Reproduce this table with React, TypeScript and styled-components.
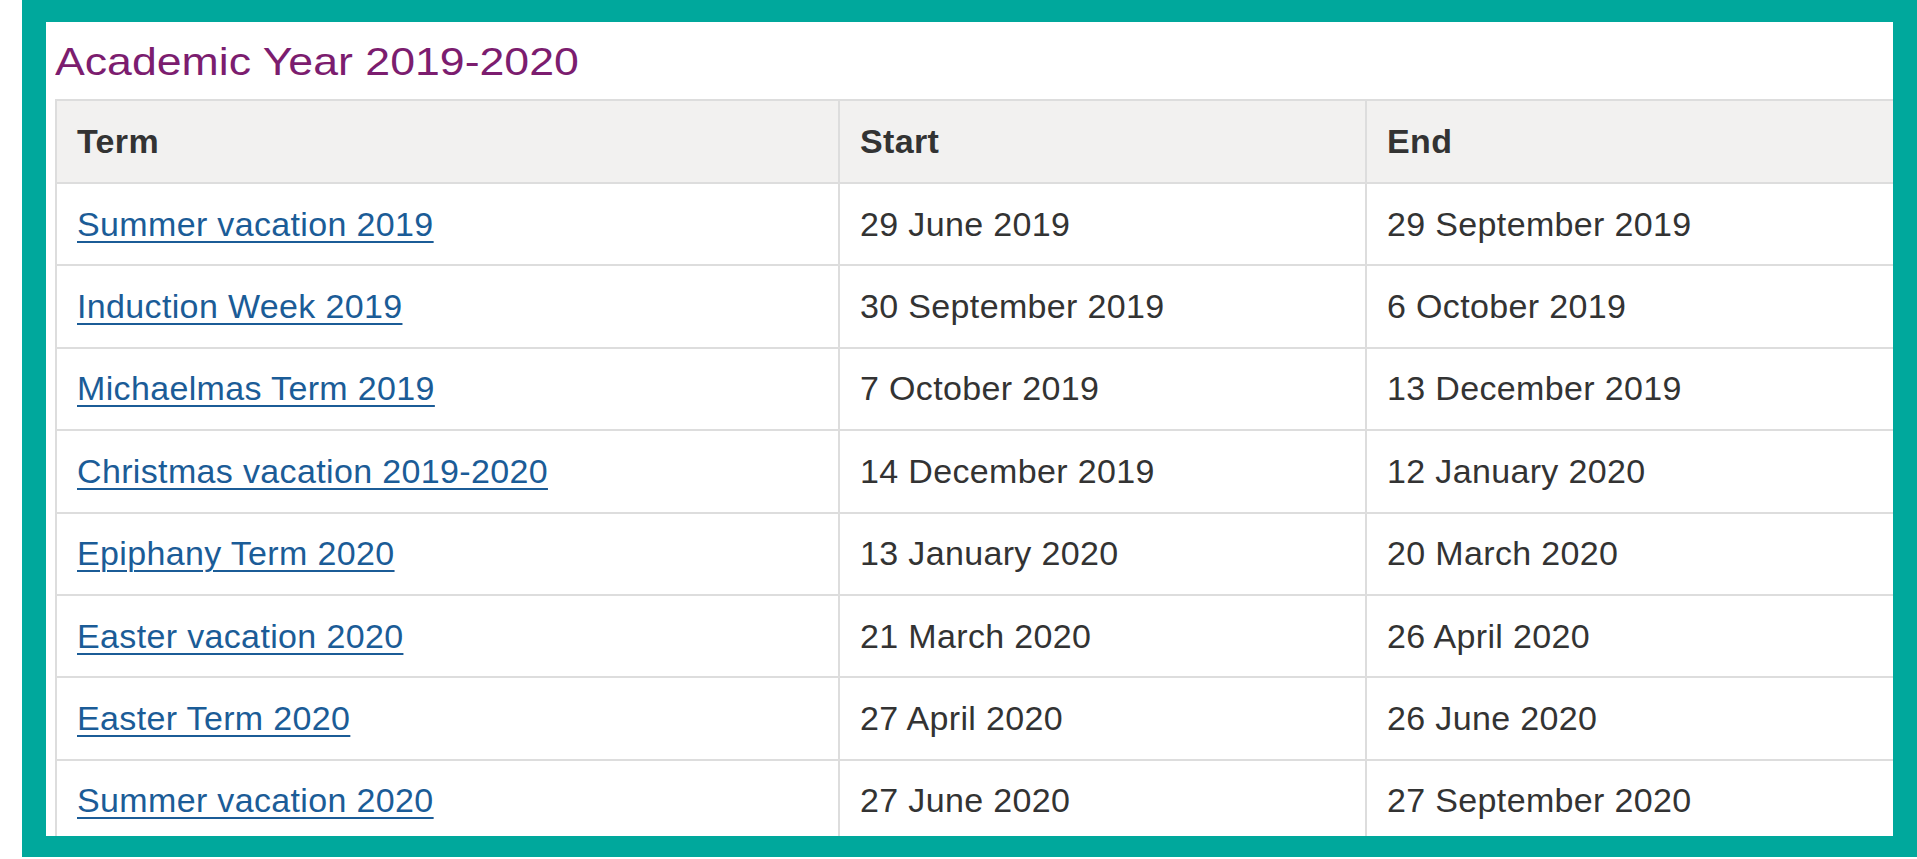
import React from "react";
import styled, { createGlobalStyle } from "styled-components";

// 학기 일정 데이터입니다
const terms = [
  { name: "Summer vacation 2019", start: "29 June 2019", end: "29 September 2019" },
  { name: "Induction Week 2019", start: "30 September 2019", end: "6 October 2019" },
  { name: "Michaelmas Term 2019", start: "7 October 2019", end: "13 December 2019" },
  { name: "Christmas vacation 2019-2020", start: "14 December 2019", end: "12 January 2020" },
  { name: "Epiphany Term 2020", start: "13 January 2020", end: "20 March 2020" },
  { name: "Easter vacation 2020", start: "21 March 2020", end: "26 April 2020" },
  { name: "Easter Term 2020", start: "27 April 2020", end: "26 June 2020" },
  { name: "Summer vacation 2020", start: "27 June 2020", end: "27 September 2020" },
];

const GlobalStyle = createGlobalStyle`
  body {
    margin: 0;
    background: #ffffff;
    font-family: "Liberation Sans", Arial, sans-serif;
  }
`;

const Frame = styled.div`
  box-sizing: border-box;
  margin-left: 22px;
  width: 1895px;
  height: 857px;
  border-style: solid;
  border-color: #00a89c;
  border-width: 22px 24px 21px 24px;
  background: #ffffff;
  overflow: hidden;
`;

const Content = styled.div`
  padding: 20px 0 0 9px;
`;

const Title = styled.h2`
  margin: 0 0 18px 0;
  font-size: 39px;
  line-height: 39px;
  font-weight: normal;
  color: #7c1d6f;
  transform: scaleX(1.145);
  transform-origin: left center;
`;

const Table = styled.table`
  border-collapse: collapse;
  table-layout: fixed;
  width: 1900px;
  font-size: 34px;
  letter-spacing: 0.35px;
  color: #333333;

  th,
  td {
    border: 2px solid #dddddd;
    padding: 0 20px;
    height: 80.4px;
    text-align: left;
    vertical-align: middle;
    white-space: nowrap;
  }

  th {
    background: #f2f1f0;
    font-weight: bold;
    height: 81px;
  }
`;

const Col = styled.col<{ $width: number }>`
  width: ${(p) => p.$width}px;
`;

const TermLink = styled.a`
  color: #1b5c97;
  text-decoration: underline;
  text-decoration-thickness: 2px;
  text-underline-offset: 5px;
`;

const App = () => {
  return (
    <>
      <GlobalStyle />
      <Frame>
        <Content>
          <Title>Academic Year 2019-2020</Title>
          <Table>
            <colgroup>
              <Col $width={783} />
              <Col $width={527} />
              <Col $width={590} />
            </colgroup>
            <thead>
              <tr>
                <th>Term</th>
                <th>Start</th>
                <th>End</th>
              </tr>
            </thead>
            <tbody>
              {terms.map((term, index) => (
                <tr key={index}>
                  <td>
                    <TermLink href="#">{term.name}</TermLink>
                  </td>
                  <td>{term.start}</td>
                  <td>{term.end}</td>
                </tr>
              ))}
            </tbody>
          </Table>
        </Content>
      </Frame>
    </>
  );
};

export default App;
